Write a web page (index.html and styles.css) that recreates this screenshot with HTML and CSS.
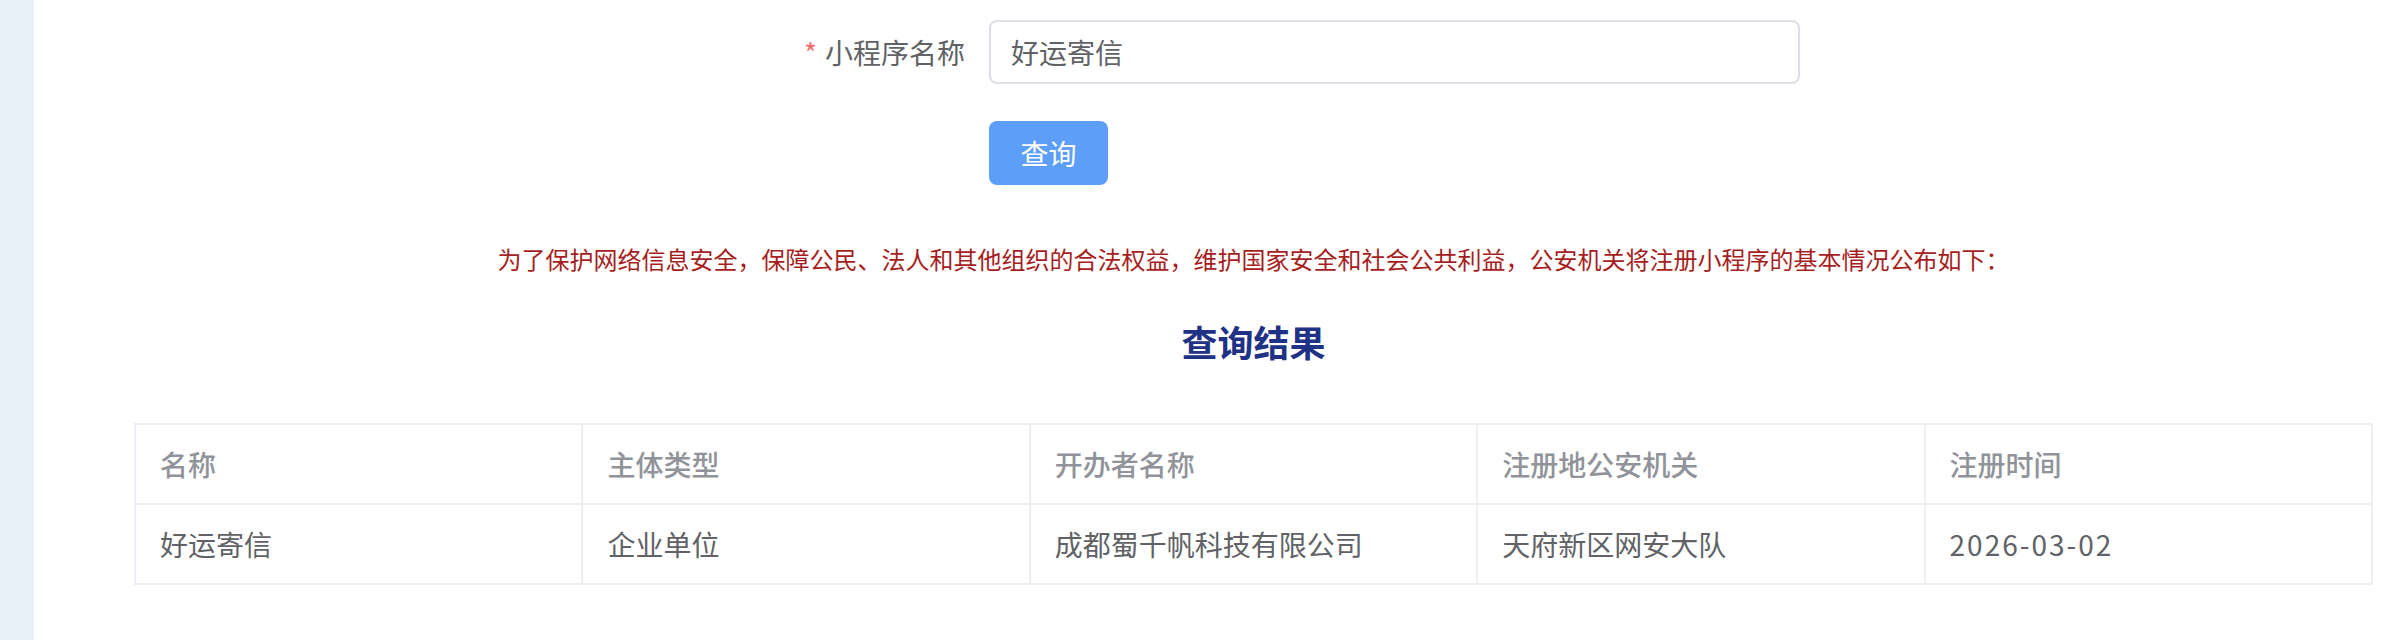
FILE: index.html
```html
<!DOCTYPE html>
<html lang="zh-CN">
<head>
<meta charset="UTF-8" />
<title>小程序备案查询</title>
<link rel="stylesheet" href="styles.css">
</head>
<body>
<div class="sidebar"></div>
<div class="main">
  <form class="query-form">
    <div class="form-item">
      <label class="form-label" for="appName"><span class="required">*</span>小程序名称</label>
      <input class="form-input" id="appName" type="text" value="好运寄信">
    </div>
    <div class="form-item form-actions">
      <button class="btn-primary" type="button">查询</button>
    </div>
  </form>

  <p class="notice">为了保护网络信息安全，保障公民、法人和其他组织的合法权益，维护国家安全和社会公共利益，公安机关将注册小程序的基本情况公布如下：</p>

  <h2 class="result-title">查询结果</h2>

  <table class="result-table">
    <thead>
      <tr>
        <th>名称</th>
        <th>主体类型</th>
        <th>开办者名称</th>
        <th>注册地公安机关</th>
        <th>注册时间</th>
      </tr>
    </thead>
    <tbody>
      <tr>
        <td>好运寄信</td>
        <td>企业单位</td>
        <td>成都蜀千帆科技有限公司</td>
        <td>天府新区网安大队</td>
        <td class="cell-date">2026-03-02</td>
      </tr>
    </tbody>
  </table>
</div>
</body>
</html>
```

FILE: styles.css
```css
*, *::before, *::after {
  box-sizing: border-box;
}
body {
  margin: 0;
  display: flex;
  min-height: 640px;
  font-family: "Noto Sans CJK SC", "Noto Sans", sans-serif;
  background: #fff;
  color: #606266;
}
.sidebar {
  width: 34px;
  flex: none;
  background: #e8f0f9;
}
.main {
  flex: 1;
  padding: 20px 31px 0 100px;
}
.query-form {
  margin-left: 635px;
}
.form-item {
  display: flex;
  align-items: center;
}
.form-label {
  width: 220px;
  padding-right: 24px;
  text-align: right;
  font-size: 28px;
  line-height: 64px;
  color: #606266;
}
.required {
  color: #f56c6c;
  margin-right: 8px;
}
.form-input {
  width: 811px;
  height: 64px;
  padding: 0 20px;
  border: 2px solid #dcdfe6;
  border-radius: 8px;
  font-family: inherit;
  font-size: 28px;
  color: #606266;
  outline: none;
}
.form-actions {
  margin-top: 37px;
  padding-left: 220px;
}
.btn-primary {
  width: 119px;
  height: 64px;
  border: none;
  border-radius: 8px;
  background: #5c9ef8;
  color: #fff;
  font-family: inherit;
  font-size: 28px;
  cursor: pointer;
}
.notice {
  margin: 56px 0 0;
  text-align: center;
  font-size: 24px;
  line-height: 36px;
  color: #a61e1e;
}
.result-title {
  margin: 39px 0 0;
  text-align: center;
  font-size: 36px;
  line-height: 50px;
  font-weight: 700;
  color: #1f3285;
}
.result-table {
  width: 100%;
  margin-top: 57px;
  border-collapse: collapse;
  table-layout: fixed;
  font-size: 28px;
}
.result-table th,
.result-table td {
  border: 2px solid #ebeef5;
  padding: 0 24px;
  height: 80px;
  text-align: left;
}
.result-table th {
  color: #909399;
  font-weight: 500;
}
.result-table td {
  color: #606266;
}
.result-table .cell-date {
  letter-spacing: 2px;
}
```
